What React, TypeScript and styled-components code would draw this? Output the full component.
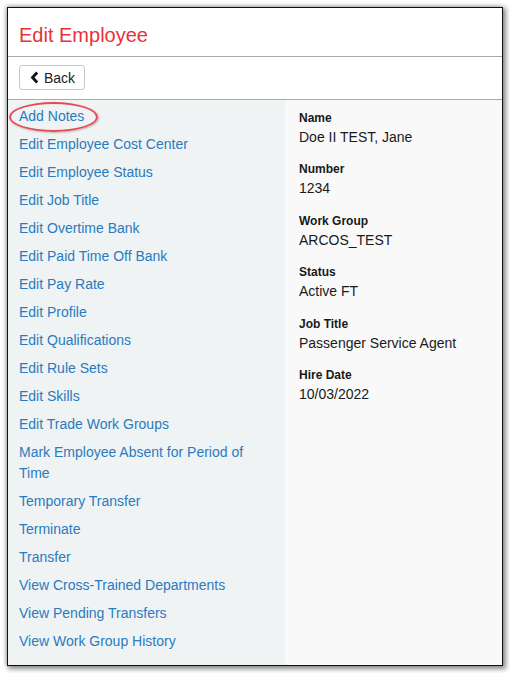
import React from "react";
import styled, { createGlobalStyle } from "styled-components";

const Global = createGlobalStyle`
  html, body { margin: 0; padding: 0; background: #ffffff; }
  body { font-family: "Liberation Sans", Arial, sans-serif; }
  * { box-sizing: border-box; }
`;

const Page = styled.div`
  padding: 7px 7px 7px 7px;
  width: 510px;
  height: 673px;
`;

const Frame = styled.div`
  width: 496px;
  height: 659px;
  border: 1px solid #111;
  background: #fff;
  box-shadow: 2px 2px 5px 1px rgba(0, 0, 0, 0.45), -1px -1px 4px rgba(0, 0, 0, 0.25);
  display: flex;
  flex-direction: column;
`;

const Header = styled.div`
  height: 49px;
  border-bottom: 1px solid #a9a9a9;
  display: flex;
  align-items: center;
  padding: 0 11px;
`;

const Title = styled.h1`
  margin: 0;
  font-weight: normal;
  font-size: 20px;
  color: #e8323c;
  padding-top: 6px;
`;

const Toolbar = styled.div`
  padding: 8px 11px 9px;
  border-bottom: 1px solid #a9a9a9;
`;

const BackButton = styled.button`
  display: inline-flex;
  align-items: center;
  gap: 5px;
  height: 25px;
  padding: 0 9px 0 10px;
  background: #fff;
  border: 1px solid #c8c8c8;
  border-radius: 3px;
  font-family: "Liberation Sans", Arial, sans-serif;
  font-size: 14px;
  color: #222;
`;

const Body = styled.div`
  flex: 1;
  display: grid;
  grid-template-columns: 277px 1fr;
`;

const Menu = styled.ul`
  list-style: none;
  margin: 0;
  padding: 6px 11px 0;
  background: #eff3f4;
  display: flex;
  flex-direction: column;
  gap: 7px;
  position: relative;
`;

const MenuLink = styled.a`
  font-size: 14px;
  line-height: 21px;
  color: #2a7bbf;
  text-decoration: none;
  display: block;
`;

const Circle = styled.span`
  position: absolute;
  left: 1px;
  top: 2px;
  width: 89px;
  height: 30px;
  border: 2.5px solid #e84a4f;
  border-radius: 50%;
  box-shadow: 1px 1px 2px rgba(0, 0, 0, 0.25);
  pointer-events: none;
`;

const Details = styled.div`
  background: #f9f9f9;
  padding: 10px 14px 0;
`;

const Field = styled.div`
  margin-bottom: 14.4px;
`;

const Label = styled.div`
  font-size: 12px;
  line-height: 17px;
  font-weight: bold;
  color: #1a1a1a;
`;

const Value = styled.div`
  font-size: 14px;
  line-height: 20px;
  color: #1a1a1a;
`;

const links = [
  "Add Notes",
  "Edit Employee Cost Center",
  "Edit Employee Status",
  "Edit Job Title",
  "Edit Overtime Bank",
  "Edit Paid Time Off Bank",
  "Edit Pay Rate",
  "Edit Profile",
  "Edit Qualifications",
  "Edit Rule Sets",
  "Edit Skills",
  "Edit Trade Work Groups",
  "Mark Employee Absent for Period of Time",
  "Temporary Transfer",
  "Terminate",
  "Transfer",
  "View Cross-Trained Departments",
  "View Pending Transfers",
  "View Work Group History",
];

const fields: [string, string][] = [
  ["Name", "Doe II TEST, Jane"],
  ["Number", "1234"],
  ["Work Group", "ARCOS_TEST"],
  ["Status", "Active FT"],
  ["Job Title", "Passenger Service Agent"],
  ["Hire Date", "10/03/2022"],
];

const Chevron = () => (
  <svg width="9" height="13" viewBox="0 0 9 13">
    <path d="M7.2 1.5 L2.5 6.5 L7.2 11.5" fill="none" stroke="#111" strokeWidth="2.8" strokeLinejoin="miter" />
  </svg>
);

export default function App() {
  return (
    <Page>
      <Global />
      <Frame>
        <Header>
          <Title>Edit Employee</Title>
        </Header>
        <Toolbar>
          <BackButton>
            <Chevron />
            Back
          </BackButton>
        </Toolbar>
        <Body>
          <Menu>
            <Circle />
            {links.map((l) => (
              <li key={l}>
                <MenuLink href="#">{l}</MenuLink>
              </li>
            ))}
          </Menu>
          <Details>
            {fields.map(([k, v]) => (
              <Field key={k}>
                <Label>{k}</Label>
                <Value>{v}</Value>
              </Field>
            ))}
          </Details>
        </Body>
      </Frame>
    </Page>
  );
}
